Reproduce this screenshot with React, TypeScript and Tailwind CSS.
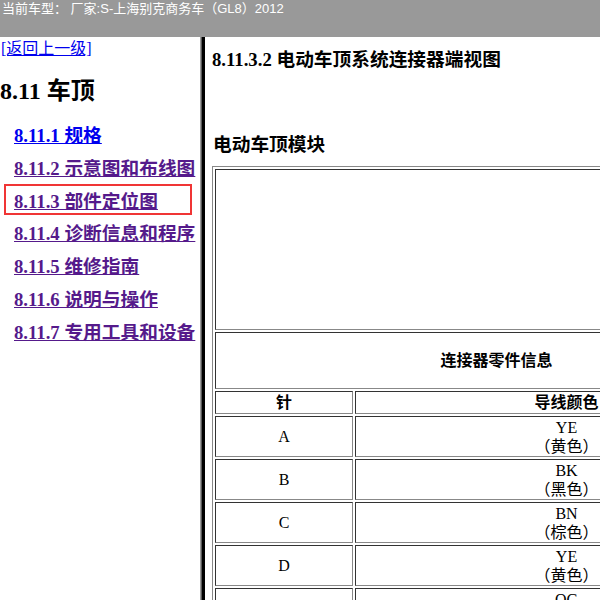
const serif = "[font-family:'Liberation_Serif','Noto_Sans_CJK_SC',serif]"

const items = [
  { label: '8.11.1 规格', visited: false },
  { label: '8.11.2 示意图和布线图', visited: true },
  { label: '8.11.3 部件定位图', visited: true },
  { label: '8.11.4 诊断信息和程序', visited: true },
  { label: '8.11.5 维修指南', visited: true },
  { label: '8.11.6 说明与操作', visited: true },
  { label: '8.11.7 专用工具和设备', visited: true },
]

const pins = [
  { pin: 'A', code: 'YE', name: '（黄色）' },
  { pin: 'B', code: 'BK', name: '（黑色）' },
  { pin: 'C', code: 'BN', name: '（棕色）' },
  { pin: 'D', code: 'YE', name: '（黄色）' },
  { pin: 'E', code: 'OG', name: '（橙色）' },
  { pin: 'F', code: 'GY', name: '（灰色）' },
]

const cell =
  'border border-t-[#333333] border-l-[#333333] border-r-[#888888] border-b-[#888888] p-0 text-center align-middle'

export default function App() {
  return (
    <div className={`w-[600px] h-[600px] overflow-hidden bg-white text-black flex flex-col ${serif}`}>
      {/* top frame */}
      <div className="h-[37px] shrink-0 bg-[#999999] px-[2px] pt-[1px] text-[13px] leading-[16px] text-white whitespace-nowrap [font-family:'Liberation_Sans','Noto_Sans_CJK_SC',sans-serif]">
        当前车型： 厂家:S-上海别克商务车（GL8）2012
      </div>

      <div className="flex flex-1 min-h-0">
        {/* left frame */}
        <div className="relative w-[200px] shrink-0 pl-[1px]">
          <a href="#" className="block w-fit mt-[2px] text-[16px] leading-[20px] text-[#0000ee] underline">
            [返回上一级]
          </a>
          <h2 className="mt-[18px] text-[24px] leading-[28px] font-bold -ml-[1px]">8.11 车顶</h2>
          <ul className="mt-[15px] pl-[13px]">
            {items.map((it) => (
              <li key={it.label} className="h-[32.8px] text-[18.72px] leading-[32.8px] font-bold whitespace-nowrap">
                <a
                  href="#"
                  className={`underline ${it.visited ? 'text-[#551a8b]' : 'text-[#0000ee]'}`}
                >
                  {it.label}
                </a>
              </li>
            ))}
          </ul>
          {/* highlight box */}
          <div className="absolute left-[4px] top-[147px] w-[188px] h-[31px] border-2 border-[#f03535]" />
        </div>

        {/* frame border */}
        <div className="w-[5px] shrink-0 bg-black border-l border-[#9a9a9a] shadow-[inset_1px_0_0_#5a5a5a]" />

        {/* right frame */}
        <div className="flex-1 min-w-0 overflow-hidden pl-[7px]">
          <h3 className="mt-[12px] text-[18.72px] leading-[22px] font-bold whitespace-nowrap">
            8.11.3.2 电动车顶系统连接器端视图
          </h3>
          <h4 className="mt-[62px] text-[18.72px] leading-[24px] font-bold whitespace-nowrap pl-[1px]">电动车顶模块</h4>
          <table className="mt-[9px] w-[569px] border-separate border-spacing-[2px] border border-[#888888] text-[16px]">
            <tbody>
              <tr className="h-[161px]">
                <td colSpan={2} className={cell}></td>
              </tr>
              <tr className="h-[57px]">
                <th colSpan={2} className={`${cell} font-bold`}>连接器零件信息</th>
              </tr>
              <tr className="h-[23px]">
                <th className={`${cell} w-[138px] font-bold leading-[19px]`}>针</th>
                <th className={`${cell} font-bold leading-[19px]`}>导线颜色</th>
              </tr>
              {pins.map((p) => (
                <tr key={p.pin} className="h-[41px]">
                  <td className={`${cell} leading-[19px]`}>{p.pin}</td>
                  <td className={`${cell} leading-[19px]`}>
                    <div>{p.code}</div>
                    <div>{p.name}</div>
                  </td>
                </tr>
              ))}
            </tbody>
          </table>
        </div>
      </div>
    </div>
  )
}
